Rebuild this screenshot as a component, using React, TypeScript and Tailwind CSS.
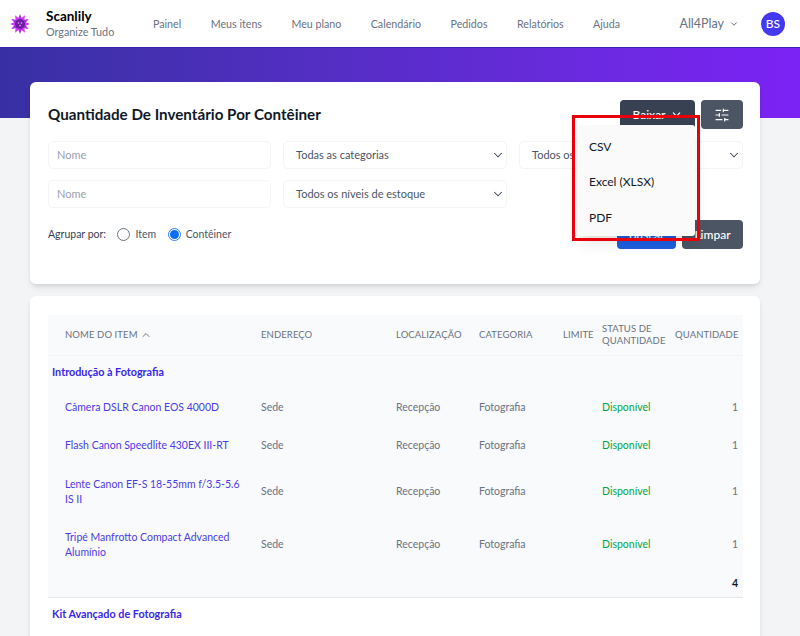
import { ChevronDown, ChevronUp, SlidersHorizontal } from "lucide-react";

const navItems = ["Painel", "Meus itens", "Meu plano", "Calendário", "Pedidos", "Relatórios", "Ajuda"];

const items = [
  { name: "Câmera DSLR Canon EOS 4000D", h: "h-[38px]" },
  { name: "Flash Canon Speedlite 430EX III-RT", h: "h-[38px]" },
  { name: "Lente Canon EF-S 18-55mm f/3.5-5.6 IS II", h: "h-[54px]" },
  { name: "Tripé Manfrotto Compact Advanced Alumínio", h: "h-[52px]" },
];

const Logo = () => {
  const points = Array.from({ length: 12 }, (_, i) => i * 30);
  return (
    <svg width="20" height="20" viewBox="0 0 20 20" className="shrink-0">
      {points.map((a) => (
        <polygon key={a} points="10,0 13,7.5 7,7.5" fill={a % 60 === 0 ? "#b32df0" : "#d03bf5"} transform={`rotate(${a} 10 10)`} />
      ))}
      <circle cx="10" cy="10" r="5" fill="#6d1fa3" />
      <circle cx="8.5" cy="9" r="0.8" fill="#e9a8f5" />
      <circle cx="11.5" cy="9" r="0.8" fill="#e9a8f5" />
      <circle cx="10" cy="11.6" r="0.8" fill="#e9a8f5" />
    </svg>
  );
};

const TextField = () => (
  <div className="h-[28px] rounded-[5px] border border-gray-100 bg-white flex items-center px-[8px] text-[11px] text-gray-400">
    Nome
  </div>
);

const SelectField = ({ label }: { label: string }) => (
  <div className="h-[28px] rounded-[5px] border border-gray-100 bg-white flex items-center justify-between pl-[12px] pr-[1px] text-[11px] text-gray-600">
    <span>{label}</span>
    <ChevronDown className="h-[14px] w-[14px] text-gray-700" strokeWidth={1.75} />
  </div>
);

const Radio = ({ label, checked }: { label: string; checked?: boolean }) => (
  <label className="flex items-center gap-[5px] text-[10.5px] text-gray-600">
    {checked ? (
      <span className="h-[13px] w-[13px] rounded-full border border-blue-500 flex items-center justify-center">
        <span className="h-[9px] w-[9px] rounded-full bg-[#0b6cf5]" />
      </span>
    ) : (
      <span className="h-[13px] w-[13px] rounded-full border border-gray-500 bg-white" />
    )}
    {label}
  </label>
);

const App = () => {
  return (
    <div className="relative h-[636px] overflow-hidden bg-gray-100 font-['Lato','Liberation_Sans',sans-serif]">
      <header className="h-[47px] bg-white flex items-center pl-[10px] pr-[15px]">
        <Logo />
        <div className="ml-[16px] w-[107px]">
          <div className="text-[13.5px] leading-[16px] font-bold text-black">Scanlily</div>
          <div className="text-[10.8px] leading-[16px] text-gray-500">Organize Tudo</div>
        </div>
        <nav className="flex gap-[29.4px] text-[10.7px] text-gray-500 mt-[2px]">
          {navItems.map((n) => (
            <span key={n}>{n}</span>
          ))}
        </nav>
        <div className="ml-auto flex items-center gap-[22px]">
          <div className="flex items-center gap-[5px] text-[12.5px] text-gray-500 mt-[1px]">
            All4Play
            <ChevronDown className="h-[10px] w-[10px] text-gray-600" strokeWidth={2} />
          </div>
          <div className="h-[24px] w-[24px] rounded-full bg-[#4438f0] text-white text-[12px] font-medium flex items-center justify-center">
            BS
          </div>
        </div>
      </header>

      <div className="h-[71px] bg-gradient-to-r from-[#3730a3] to-[#7c22f5] border-t border-[#3f22b5]" />

      <main className="-mt-[36px] pl-[30px] pr-[40px] flex flex-col gap-[12px]">
        <section className="relative rounded-[6px] bg-white shadow-md px-[18px] pt-[18px] pb-[35px]">
          <div className="flex items-center justify-between h-[29px]">
            <h1 className="text-[15.2px] font-bold text-gray-900">Quantidade De Inventário Por Contêiner</h1>
            <div className="flex gap-[6px] mr-[-1px]">
              <div className="relative">
                <button className="h-[29px] w-[75px] rounded-[4px] bg-[#374151] text-white text-[12px] font-medium flex items-center justify-center gap-[4px]">
                  Baixar
                  <ChevronDown className="h-[13px] w-[13px]" strokeWidth={2} />
                </button>
                <div className="absolute z-10 right-0 top-[25px] w-[118px] h-[111px] bg-[#fafafa] shadow-lg rounded-[3px] text-[12px] text-gray-900 pl-[12px] pt-[4px] flex flex-col justify-around">
                  <span>CSV</span>
                  <span>Excel (XLSX)</span>
                  <span>PDF</span>
                </div>
              </div>
              <button className="h-[29px] w-[42px] rounded-[4px] bg-[#4b5563] text-white flex items-center justify-center">
                <SlidersHorizontal className="h-[16px] w-[16px]" strokeWidth={1.75} />
              </button>
            </div>
          </div>

          <div className="mt-[12px] mr-[-1px] grid grid-cols-[223px_224px_224px] gap-x-[12px] gap-y-[11px]">
            <TextField />
            <SelectField label="Todas as categorias" />
            <SelectField label="Todos os estados" />
            <TextField />
            <SelectField label="Todos os níveis de estoque" />
          </div>

          <div className="mt-[12px] mr-[-1px] flex items-center justify-between">
            <div className="flex items-center gap-[11.5px] text-[10.5px] text-gray-700">
              <span>Agrupar por:</span>
              <Radio label="Item" />
              <Radio label="Contêiner" checked />
            </div>
            <div className="flex gap-[6px]">
              <button className="h-[29px] w-[59px] rounded-[4px] bg-[#1d5fe0] text-white text-[12px] font-medium">Buscar</button>
              <button className="h-[29px] w-[61px] rounded-[4px] bg-[#4b5563] text-white text-[12px] font-medium">Limpar</button>
            </div>
          </div>
        </section>

        <section className="rounded-[6px] bg-white shadow-md px-[18px] pt-[19px] pb-[30px]">
          <table className="w-[695px] table-fixed border-collapse text-[10.5px] text-gray-500">
            <colgroup>
              <col className="w-[213px]" />
              <col className="w-[135px]" />
              <col className="w-[83px]" />
              <col className="w-[84px]" />
              <col className="w-[39px]" />
              <col className="w-[73px]" />
              <col className="w-[68px]" />
            </colgroup>
            <thead className="bg-[#f9fafb]">
              <tr className="h-[40px] border-b border-gray-100 text-[9.5px] tracking-[0.01em] text-gray-500 text-left">
                <th className="font-normal pl-[17px]">
                  <span className="flex items-center gap-[2px]">
                    NOME DO ITEM
                    <ChevronUp className="h-[12px] w-[12px]" strokeWidth={2} />
                  </span>
                </th>
                <th className="font-normal">ENDEREÇO</th>
                <th className="font-normal">LOCALIZAÇÃO</th>
                <th className="font-normal">CATEGORIA</th>
                <th className="font-normal">LIMITE</th>
                <th className="font-normal leading-[12px]">STATUS DE QUANTIDADE</th>
                <th className="font-normal text-right pr-[5px]">QUANTIDADE</th>
              </tr>
            </thead>
            <tbody className="bg-[#f9fafb] [&_td]:pt-[1px]">
              <tr className="h-[33px]">
                <td colSpan={7} className="pl-[4px] text-[10.8px] font-bold text-[#3a26ee]">Introdução à Fotografia</td>
              </tr>
              {items.map((item) => (
                <tr key={item.name} className={item.h}>
                  <td className="pl-[17px] pr-[14px] leading-[15px] text-[#4a3ce8]">{item.name}</td>
                  <td>Sede</td>
                  <td>Recepção</td>
                  <td>Fotografia</td>
                  <td />
                  <td className="text-green-600">Disponível</td>
                  <td className="text-right pr-[5px]">1</td>
                </tr>
              ))}
              <tr className="h-[27px] border-b border-gray-200">
                <td colSpan={7} className="text-right pr-[5px] font-bold text-gray-900">4</td>
              </tr>
            </tbody>
            <tbody className="bg-white [&_td]:pt-[1px]">
              <tr className="h-[33px]">
                <td colSpan={7} className="pl-[4px] text-[10.8px] font-bold text-[#3a26ee]">Kit Avançado de Fotografia</td>
              </tr>
            </tbody>
          </table>
        </section>
      </main>

      {/* annotation drawn over the shot */}
      <div className="absolute left-[572px] top-[115px] w-[128px] h-[126px] border-[3px] border-[#e8000b] z-20 pointer-events-none" />
    </div>
  );
};

export default App;
